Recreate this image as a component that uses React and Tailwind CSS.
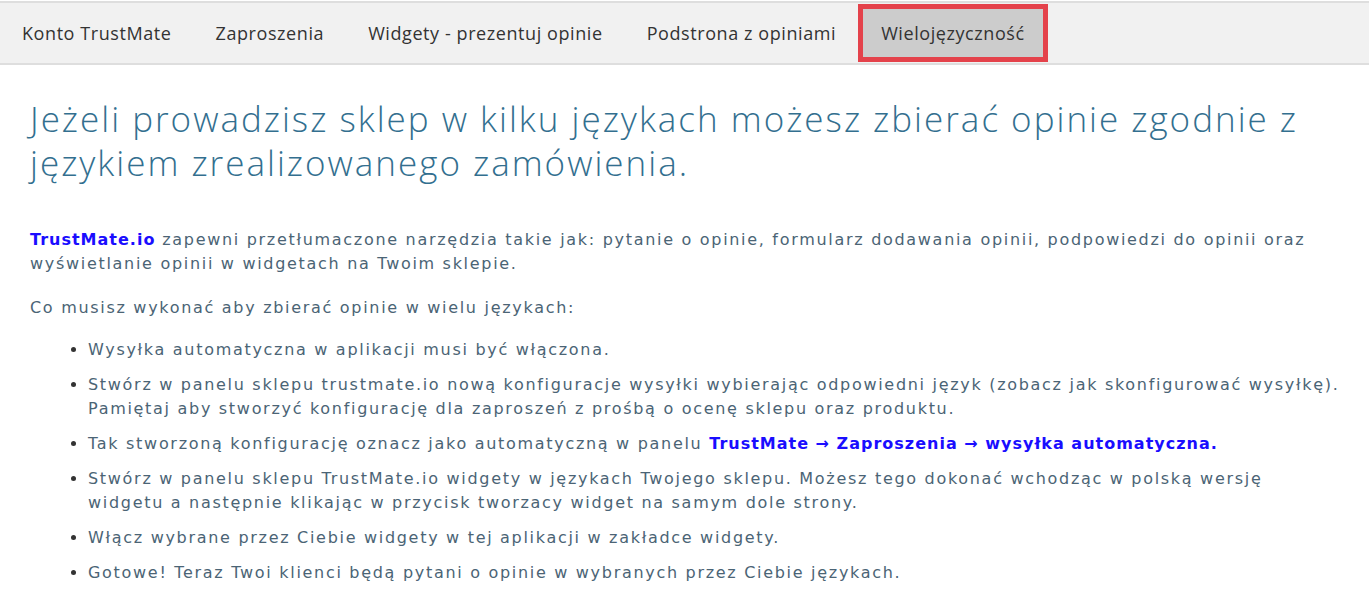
export default function App() {
  const tabs = ["Konto TrustMate", "Zaproszenia", "Widgety - prezentuj opinie", "Podstrona z opiniami"];
  const body = { fontFamily: '"DejaVu Sans", sans-serif' };
  return (
    <div className="w-[1369px] h-[594px] bg-white overflow-hidden">
      <nav className="mt-[1px] h-[64px] bg-[#f1f1f1] border-t-2 border-b-2 border-[#dedede] flex items-stretch" style={{ fontFamily: '"Open Sans", sans-serif' }}>
        {tabs.map((t) => (
          <div key={t} className="px-[22px] flex items-center text-[18px] tracking-[0.58px] text-[#333]">{t}</div>
        ))}
        <div className="my-[1px] px-[18px] flex items-center text-[18px] tracking-[0.58px] text-[#333] bg-[#cccccc] border-[5px] border-[#e4424b]">Wielojęzyczność</div>
      </nav>
      <main className="pl-[30px] pr-[8px] pt-[32px]">
        <h1 className="text-[35px] leading-[44px] font-light text-[#336f8f] tracking-[2px]" style={{ fontFamily: '"Open Sans", sans-serif' }}>
          Jeżeli prowadzisz sklep w kilku językach możesz zbierać opinie zgodnie z<br />językiem zrealizowanego zamówienia.
        </h1>
        <div className="mt-[43px] text-[16px] leading-[24px] tracking-[1.7px] text-[#4b6475]" style={body}>
          <p>
            <span className="text-[#1a0dff] font-bold tracking-[1px]">TrustMate.io</span> zapewni przetłumaczone narzędzia takie jak: pytanie o opinie, formularz dodawania opinii, podpowiedzi do opinii oraz wyświetlanie opinii w widgetach na Twoim sklepie.
          </p>
          <p className="mt-[20px]">Co musisz wykonać aby zbierać opinie w wielu językach:</p>
          <ul className="mt-[18px] pl-[58px] list-disc marker:text-[#333] flex flex-col gap-[11px]">
            <li>Wysyłka automatyczna w aplikacji musi być włączona.</li>
            <li>Stwórz w panelu sklepu trustmate.io nową konfiguracje wysyłki wybierając odpowiedni język (zobacz jak skonfigurować wysyłkę). Pamiętaj aby stworzyć konfigurację dla zaproszeń z prośbą o ocenę sklepu oraz produktu.</li>
            <li>Tak stworzoną konfigurację oznacz jako automatyczną w panelu <span className="text-[#1a0dff] font-bold tracking-[1px]">TrustMate → Zaproszenia → wysyłka automatyczna.</span></li>
            <li>Stwórz w panelu sklepu TrustMate.io widgety w językach Twojego sklepu. Możesz tego dokonać wchodząc w polską wersję<br />widgetu a następnie klikając w przycisk tworzacy widget na samym dole strony.</li>
            <li>Włącz wybrane przez Ciebie widgety w tej aplikacji w zakładce widgety.</li>
            <li>Gotowe! Teraz Twoi klienci będą pytani o opinie w wybranych przez Ciebie językach.</li>
          </ul>
        </div>
      </main>
    </div>
  );
}
